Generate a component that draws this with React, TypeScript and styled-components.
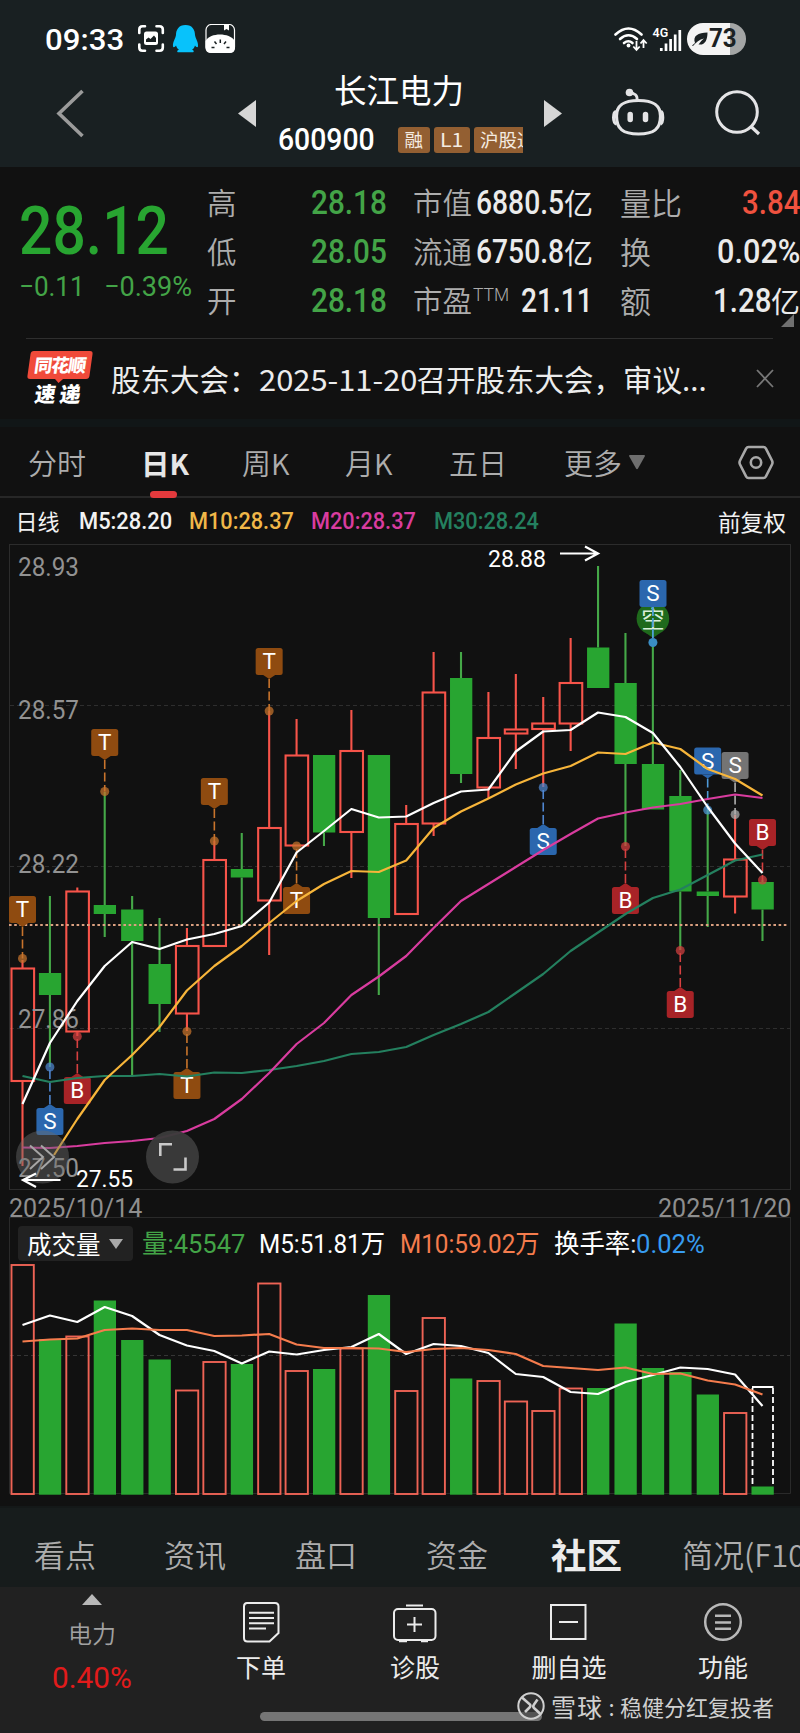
import React, { ReactNode, useLayoutEffect, useRef, useState } from 'react';
import styled, { createGlobalStyle } from 'styled-components';

const GREEN = '#28a531';
const RED = '#f7544a';
const CJK = '"Noto Sans CJK SC", sans-serif';
const DIN = 'Roboto, "Noto Sans CJK SC", sans-serif';

const GlobalStyle = createGlobalStyle`
  * { box-sizing: border-box; }
  body { margin: 0; background: #111; font-family: ${CJK}; }
  svg { display: block; }
`;

/* ---------- text squeezed to a fixed advance, like a DIN numeral face ---------- */

const FitBox = styled.span<{ $w: number }>`
  display: inline-block;
  width: ${(p) => p.$w}px;
  white-space: nowrap;
  flex: none;
`;
const FitInner = styled.span`
  display: inline-block;
  transform-origin: 0 50%;
`;

function Fit({ w, children }: { w: number; children: ReactNode }) {
  const ref = useRef<HTMLSpanElement>(null);
  const [scale, setScale] = useState(1);
  useLayoutEffect(() => {
    if (ref.current && ref.current.offsetWidth) setScale(w / ref.current.offsetWidth);
  }, [w]);
  return (
    <FitBox $w={w}>
      <FitInner ref={ref} style={{ transform: `scaleX(${scale})` }}>{children}</FitInner>
    </FitBox>
  );
}

/* ---------- header ---------- */

const Page = styled.div`
  position: relative;
  width: 800px;
  height: 1733px;
  overflow: hidden;
  background: #111;
  color: #fff;
`;
const Header = styled.header`
  height: 167px;
  background: #192022;
`;
const StatusBar = styled.div`
  height: 72px;
  padding: 6px 54px 0 45px;
  display: flex;
  align-items: center;
`;
const Clock = styled.span`
  padding-top: 2px;
  font: 500 30px/36px ${DIN};
  width: 93px;
`;
const StatusRight = styled.div`
  margin-left: auto;
  display: flex;
  align-items: center;
`;
const Battery = styled.div`
  width: 59px;
  height: 32px;
  border-radius: 16px;
  margin-left: 5px;
  padding-left: 4px;
  display: flex;
  align-items: center;
  background: linear-gradient(90deg, #f4f4f4 0 43px, #a3a5a5 43px);
  color: #1b2123;
  font: 700 25px/34px ${DIN};
`;
const NavBar = styled.div`
  height: 95px;
  display: grid;
  grid-template-columns: 238px 40px 245px 89px 102px 1fr;
`;
const NavIcon = styled.div<{ $x: number; $y: number }>`
  padding: ${(p) => p.$y}px 0 0 ${(p) => p.$x}px;
`;
const TitleBlock = styled.div`
  overflow: hidden;
`;
const StockName = styled.div`
  height: 48px;
  padding-left: 56px;
  font-size: 32.5px;
  line-height: 34px;
`;
const CodeRow = styled.div`
  display: flex;
  align-items: center;
  height: 40px;
  gap: 4px;
`;
const Code = styled.div`
  flex: none;
  width: 116px;
  font: 500 31px/40px ${DIN};
`;
const Tag = styled.span`
  flex: none;
  height: 26px;
  padding: 0 6.5px;
  border-radius: 3px;
  background: #935f32;
  color: #f5ece2;
  font-size: 18.5px;
  line-height: 25px;
  white-space: nowrap;
`;

/* ---------- quote ---------- */

const Quote = styled.section`
  position: relative;
  height: 171px;
  display: grid;
  grid-template-columns: 207px 206px 207px 180px;
`;
const PriceBlock = styled.div`
  padding: 24px 0 0 19px;
  color: ${GREEN};
`;
const Price = styled.div`
  font: 500 67px/80px ${DIN};
`;
const Change = styled.div`
  display: flex;
  gap: 19px;
  margin-top: -1px;
  font: 400 28px/34px ${DIN};
  color: #43a447;
`;
const StatColumn = styled.div<{ $pad: number }>`
  padding: 10.5px ${(p) => p.$pad}px 0 0;
`;
const Stat = styled.div`
  height: 49px;
  display: flex;
  align-items: center;
  justify-content: space-between;
`;
const StatLabel = styled.span<{ $size?: number }>`
  color: #adadad;
  font-size: ${(p) => p.$size || 29.5}px;
  font-weight: 350;
  line-height: 47px;
  margin-top: -2px;
  white-space: nowrap;
`;
const Sup = styled.sup`
  font: 300 17.5px/1 ${DIN};
  vertical-align: 11px;
  margin-left: 1px;
`;
const StatValue = styled.span<{ $color?: string }>`
  display: flex;
  align-items: center;
  color: ${(p) => p.$color || '#ebebeb'};
  font: 500 34px/49px ${DIN};
`;
const Unit = styled.span`
  font: 400 29px/45px ${CJK};
`;
const ExpandCorner = styled.svg`
  position: absolute;
  right: 6px;
  top: 147px;
`;

/* ---------- news ---------- */

const News = styled.section`
  height: 80px;
  margin-left: 26px;
  display: flex;
  align-items: flex-start;
`;
const NewsRule = styled.div`
  height: 1px;
  margin: 0 27px 0 26px;
  background: #2f2f2f;
`;
const NewsLogo = styled.div`
  width: 85px;
  padding-top: 12px;
`;
const LogoTop = styled.div`
  position: relative;
  width: 62px;
  height: 28px;
  margin-left: 3px;
  border-radius: 3px;
  transform: skewX(-8deg);
  background: #f04a3a;
  font: 900 18px/27px ${CJK};
  text-align: center;
  letter-spacing: -1px;
  &::after {
    content: '';
    position: absolute;
    left: 27px;
    bottom: -4px;
    border: 5px solid transparent;
    border-top-color: #f04a3a;
    border-bottom: 0;
  }
`;
const LogoBottom = styled.div`
  padding-left: 9px;
  transform: skewX(-8deg);
  font: 900 21px/28px ${CJK};
  letter-spacing: 4px;
`;
const NewsText = styled.div`
  width: 645px;
  padding-top: 17px;
  color: #ececec;
  font-size: 29.5px;
  line-height: 44px;
  white-space: nowrap;
`;
const Band = styled.div`
  height: 8px;
  background: #111617;
`;

/* ---------- period tabs ---------- */

const PeriodTabs = styled.nav`
  height: 71px;
  border-bottom: 2px solid #272727;
  padding-left: 28px;
  display: grid;
  grid-template-columns: 113px 101px 103px 104px 115px 65px 109px 1fr;
`;
const PeriodTab = styled.div<{ $active?: boolean }>`
  position: relative;
  color: ${(p) => (p.$active ? '#e6e6e6' : '#adadad')};
  font-size: ${(p) => (p.$active ? 28.5 : 29)}px;
  font-weight: ${(p) => (p.$active ? 700 : 350)};
  line-height: 71px;
  white-space: nowrap;
`;
const Underline = styled.i`
  position: absolute;
  left: 9px;
  top: 64px;
  width: 27px;
  height: 7px;
  border-radius: 4px;
  background: #e33a3d;
`;
const TabIcon = styled.div<{ $y: number }>`
  padding-top: ${(p) => p.$y}px;
`;
const MaRow = styled.div`
  height: 42px;
  padding: 4px 14px 0 15.5px;
  display: flex;
  align-items: center;
`;
const MaLabel = styled.span<{ $push?: boolean }>`
  font-size: ${(p) => (p.$push ? 22.7 : 22)}px;
  line-height: 36px;
  width: ${(p) => (p.$push ? 'auto' : '63px')};
  margin-left: ${(p) => (p.$push ? 'auto' : 0)};
  margin-top: ${(p) => (p.$push ? 2 : -3)}px;
  color: #f2f2f2;
`;
const MaValue = styled.span<{ $color: string; $gap: number }>`
  margin-right: ${(p) => p.$gap}px;
  color: ${(p) => p.$color};
  font: 500 24px/36px ${DIN};
`;
const DateRow = styled.div`
  height: 25px;
  padding: 0 9px;
  display: flex;
  justify-content: space-between;
  color: #8e8e8e;
  font: 400 26px/32px ${DIN};
`;
const VolumeHeader = styled.div`
  height: 45px;
  margin: 0 9px;
  padding: 7px 0 0 8px;
  border: 1px solid #2a2a2a;
  border-bottom: 0;
  display: flex;
  align-items: center;
`;
const VolumeSelect = styled.div`
  width: 115px;
  height: 35px;
  margin-right: 9px;
  padding-left: 9px;
  border-radius: 4px;
  background: #222;
  display: flex;
  align-items: center;
  gap: 8px;
  font-size: 24.5px;
  line-height: 34px;
`;
const VolumeValue = styled.span<{ $color?: string; $gap?: number }>`
  margin-right: ${(p) => p.$gap ?? 14}px;
  color: ${(p) => p.$color || '#fff'};
  font: 400 26px/36px ${DIN};
`;

/* ---------- bottom ---------- */

const InfoTabs = styled.nav`
  height: 79px;
  padding: 0 0 0 34px;
  background: #171c1c;
  display: grid;
  grid-template-columns: 130px 131px 131px 125px 131px 1fr;
`;
const InfoTab = styled.div<{ $active?: boolean }>`
  overflow: hidden;
  color: ${(p) => (p.$active ? '#ececec' : '#adadad')};
  font-size: ${(p) => (p.$active ? 35.5 : 31)}px;
  font-weight: ${(p) => (p.$active ? 700 : 350)};
  line-height: 91px;
  white-space: nowrap;
`;
const ActionBar = styled.footer`
  height: 146px;
  background: #212121;
  display: grid;
  grid-template-columns: 184px repeat(4, 1fr);
`;
const Action = styled.div`
  padding-top: 10px;
  display: flex;
  flex-direction: column;
  align-items: center;
  color: #ececec;
  font-size: 25px;
  line-height: 42px;
`;
const Sector = styled.div`
  padding: 7px 0 0 0;
  display: flex;
  flex-direction: column;
  align-items: center;
  color: #a2a2a2;
  font-size: 24px;
  font-weight: 350;
  line-height: 55px;
`;
const SectorChange = styled.div`
  padding-top: 1px;
  color: #e21b1b;
  font: 400 29px/34px ${DIN};
`;
const HomeIndicator = styled.div`
  position: absolute;
  left: 260px;
  top: 1712px;
  width: 282px;
  height: 9px;
  border-radius: 5px;
  background: #757575;
`;
const Watermark = styled.div`
  position: absolute;
  left: 517px;
  top: 1688px;
  display: flex;
  align-items: center;
  color: #d0d0d0;
  font-size: 22px;
  line-height: 36px;
  white-space: nowrap;
`;
const Brand = styled.span`
  margin-left: 6px;
  font-size: 25px;
  font-weight: 400;
  letter-spacing: 1px;
`;
const Colon = styled.span`
  width: 17px;
  text-align: center;
`;

/* ---------- chart data (x = slot, y in page pixels) ---------- */

const slotX = (i: number) => 22.5 + i * 27.407;

type Candle = [up: 0 | 1, high: number, top: number, bottom: number, low: number];
const candles: Candle[] = [
  [1, 960, 968.5, 1081, 1166], [0, 896, 973, 995, 1067], [1, 887.5, 891.5, 1031.5, 1036],
  [0, 792, 905, 914, 937], [0, 896, 909.5, 941, 1076], [0, 918, 964, 1004, 1032],
  [1, 928, 946, 1013.5, 1031], [1, 841, 860, 946, 946], [0, 833, 869, 877.5, 926],
  [1, 711, 828, 900.5, 955], [1, 719, 755.5, 845.5, 845.5], [0, 755, 755, 832.5, 846],
  [1, 710, 751, 832, 878], [0, 755, 755, 918, 995], [1, 805, 824, 914, 914],
  [1, 652, 692.5, 823.5, 836], [0, 652, 678, 774, 783], [1, 692, 738, 787.5, 798],
  [1, 674, 729.5, 733.5, 769], [1, 697, 723.5, 729, 787], [1, 638, 683, 723.5, 751],
  [0, 566, 647.5, 688, 688], [0, 633, 683, 764, 846], [0, 642, 764, 809.5, 809.5],
  [0, 770, 796, 891.5, 950], [0, 810, 891.5, 896, 927], [1, 815, 859.5, 896.5, 913.5],
  [0, 880, 882, 909.5, 941],
];
const ma5 = [1104, 1043, 1001, 966, 942, 949, 939.5, 934, 926, 902.5, 852.5, 831, 809, 817.5, 816.5, 803, 791.5, 789.5, 751.5, 731.5, 730, 712.5, 717, 733, 767, 807, 843.5, 873];
/* the ten-day line enters the frame between the second and the third slot */
const ma10 = [1119, 1080, 1055, 1027, 990.5, 966, 946, 923, 901, 884, 871, 872, 860.5, 828, 811.5, 798.5, 784.5, 773.5, 766, 752.5, 754, 742.5, 749, 769, 779, 795.5];
const ma20 = [1147.5, 1148, 1146, 1143, 1141, 1138, 1131, 1119, 1099, 1073, 1044, 1023, 995, 976.5, 956, 928, 901, 884, 867, 850, 834, 818.5, 812.5, 807.5, 804, 799, 794.5, 798];
const ma30 = [1076, 1082, 1078, 1076, 1076, 1074, 1076.5, 1072.5, 1073, 1070, 1066, 1061, 1054, 1052, 1047, 1035, 1024, 1012, 993, 974, 951, 932.5, 914, 898, 889.5, 875, 860.5, 854.5];
const volumes = [1265, 1339, 1336.5, 1300.5, 1340, 1359.5, 1390.5, 1362, 1364, 1283.5, 1371, 1369, 1348.5, 1295, 1391, 1318, 1378.5, 1381, 1401.5, 1411, 1388.5, 1388, 1323.5, 1368, 1372, 1394.5, 1413, 1486.5];
const vol5 = [1325, 1315.5, 1322, 1307, 1316, 1335, 1345.5, 1351, 1363.5, 1351.5, 1354.5, 1350, 1347, 1334, 1354, 1344, 1346, 1353, 1374, 1377, 1392, 1394, 1382, 1375, 1367.5, 1369, 1374.5, 1406];
const vol10 = [1341.5, 1339.5, 1338.5, 1330, 1328.5, 1330, 1330, 1336, 1335.5, 1334, 1344.5, 1348, 1348, 1348.5, 1352, 1349, 1348, 1350, 1354, 1366, 1368, 1370, 1367.5, 1374, 1373.5, 1380.5, 1384.5, 1394.5];

const toPoints = (ys: number[], first = 0) =>
  ys.map((y, i) => `${slotX(i + first).toFixed(1)},${y}`).join(' ');

type Mark = [letter: string, slot: number, boxTop: number, dot: number, color: string, line: string];
const BROWN = '#8f4b10';
const BLUE = '#2b67ae';
const CRIMSON = '#a82327';
const marks: Mark[] = [
  ['T', 0, 896, 958.5, BROWN, '#c8742c'], ['T', 3, 729, 791.5, BROWN, '#c8742c'],
  ['T', 7, 778, 841, BROWN, '#c8742c'], ['T', 9, 648, 711, BROWN, '#c8742c'],
  ['T', 6, 1072, 1031.5, BROWN, '#c8742c'], ['T', 10, 887, 846, BROWN, '#c8742c'],
  ['S', 1, 1108, 1067, BLUE, '#4f86d0'], ['B', 2, 1077, 1036.5, CRIMSON, '#d64040'],
  ['S', 19, 828, 787.5, BLUE, '#4f86d0'], ['B', 22, 887, 846.5, CRIMSON, '#d64040'],
  ['B', 24, 991, 950.5, CRIMSON, '#d64040'], ['S', 25, 747.5, 810, BLUE, '#4f9ad8'],
  ['S', 26, 752, 814.5, '#747474', '#b0b0b0'], ['B', 27, 819, 880, CRIMSON, '#d64040'],
];

function MarkFlag({ mark: [letter, slot, top, dot, color, line] }: { mark: Mark }) {
  const x = slotX(slot);
  const above = dot > top;
  const edge = above ? top + 27 : top;
  const tip = above ? edge + 4 : edge - 4;
  return (
    <g>
      <line x1={x} x2={x} y1={tip} y2={dot} stroke={line} strokeWidth="1.6" strokeDasharray="9 3.5" />
      <circle cx={x} cy={dot} r="4.5" fill={line} fillOpacity="0.72" />
      <rect x={x - 13.5} y={top} width="27" height="27" rx="2.5" fill={color} />
      <path d={`M${x - 6} ${edge}L${x} ${tip}L${x + 6} ${edge}Z`} fill={color} />
      <text x={x} y={top + 21} textAnchor="middle" fontFamily={DIN} fontSize="22.5" fontWeight="400" fill="#fff">{letter}</text>
    </g>
  );
}

function PriceChart() {
  return (
    <svg width="800" height="652" viewBox="0 540 800 652">
      <rect x="9.5" y="544.5" width="781" height="645" fill="none" stroke="#2c2c2c" />
      {[705.5, 866.5, 1028.5].map((y) => (
        <line key={y} x1="10" x2="790" y1={y} y2={y} stroke="#2e2e2e" strokeDasharray="4 3" />
      ))}
      {candles.map(([up, high, top, bottom, low], i) => {
        const x = slotX(i);
        const c = up ? RED : GREEN;
        return (
          <g key={i}>
            <path d={`M${x} ${high}V${top}M${x} ${bottom}V${low}`} stroke={up ? RED : '#45a848'} strokeWidth="2.1" />
            {up ? (
              <rect x={x - 11} y={top} width="22.6" height={bottom - top} fill="none" stroke={c} strokeWidth="2.1" />
            ) : (
              <rect x={x - 11} y={top} width="22.3" height={bottom - top} fill={c} />
            )}
          </g>
        );
      })}
      <line x1="9" x2="789" y1="925" y2="925" stroke="#dba080" strokeWidth="1.8" strokeDasharray="2.6 2.6" />
      <g fontFamily={DIN} fontSize="26" fill="#929292">
        {([['28.93', 575.5], ['28.57', 718.5], ['28.22', 873], ['27.86', 1028], ['27.50', 1176.5]] as [string, number][]).map(([t, y]) => (
          <text key={t} x="18" y={y} textLength="61" lengthAdjust="spacingAndGlyphs">{t}</text>
        ))}
      </g>
      {marks.map((m) => <MarkFlag key={`${m[0]}${m[1]}`} mark={m} />)}
      <circle cx="652.9" cy="618.5" r="16.3" fill="#1f6a1c" />
      <path d="M646 633L653 638L660 633Z" fill="#1f6a1c" />
      <text x="652.9" y="627.5" textAnchor="middle" fontFamily={CJK} fontSize="23.5" fill="#d9efd9">空</text>
      <rect x="639.5" y="580" width="27" height="27" rx="2.5" fill={BLUE} />
      <text x="652.9" y="601" textAnchor="middle" fontFamily={DIN} fontSize="22.5" fill="#fff">S</text>
      <line x1="652.9" x2="652.9" y1="607" y2="642" stroke="#4fa0d8" strokeWidth="1.8" strokeDasharray="9 2" />
      <circle cx="652.9" cy="642.5" r="4.5" fill="#3a8dc4" />
      <g fill="none" strokeWidth="2.2" strokeLinejoin="round">
        <polyline points={toPoints(ma30)} stroke="#24805f" />
        <polyline points={toPoints(ma20)} stroke="#d93c9f" />
        <polyline points={`54,1155 ${toPoints(ma10, 2)}`} stroke="#f7b53a" />
        <polyline points={toPoints(ma5)} stroke="#fff" />
      </g>
      <g fontFamily={DIN} fontSize="24" fill="#fff">
        <text x="488" y="567" textLength="58" lengthAdjust="spacingAndGlyphs">28.88</text>
        <text x="76" y="1187" textLength="57" lengthAdjust="spacingAndGlyphs">27.55</text>
      </g>
      <circle cx="42.5" cy="1157" r="26.5" fill="#6a6a6a" fillOpacity="0.45" />
      <path d="M30 1145.5L43 1157L30 1169M41 1145.5L54 1157L41 1169" fill="none" stroke="#a5a5a5" strokeWidth="2" />
      <circle cx="172.5" cy="1157" r="26.5" fill="#3b3b3b" fillOpacity="0.96" />
      <path d="M160.3 1156V1144.3H172M173.500 1169.500H185.500V1157.500" fill="none" stroke="#c9c9c9" strokeWidth="2.6" />
      <path d="M560 553.5H597M585 546.5L598 553.5L585 560.5M60.5 1180H24M36 1173.5L23 1180L36 1187" fill="none" stroke="#fff" strokeWidth="2.2" />
    </svg>
  );
}

function VolumeChart() {
  const base = 1494;
  return (
    <svg width="800" height="246" viewBox="0 1262 800 246">
      <path d="M9.5 1262V1493.5H790.5V1262" fill="none" stroke="#2a2a2a" />
      <line x1="10" x2="790" y1="1355.5" y2="1355.5" stroke="#353535" strokeDasharray="4 3" />
      {volumes.map((top, i) => {
        const x = slotX(i);
        return candles[i][0] ? (
          <rect key={i} x={x - 11} y={top} width="22.3" height={base - top} fill="none" stroke="#ee6355" strokeWidth="1.9" />
        ) : (
          <rect key={i} x={x - 11} y={top} width="22.3" height={base + 0.7 - top} fill={GREEN} />
        );
      })}
      <path d="M752 1387H773.5" stroke="#fff" strokeWidth="2" />
      <path d="M752.5 1388V1486M773 1388V1486" stroke="#fff" strokeWidth="1.8" strokeDasharray="6 3" />
      <g fill="none" strokeWidth="2.2" strokeLinejoin="round">
        <polyline points={toPoints(vol5)} stroke="#fff" />
        <polyline points={toPoints(vol10)} stroke="#f57c4d" />
      </g>
      <rect x="0" y="1506" width="800" height="2" fill="#141818" />
    </svg>
  );
}

/* ---------- icons ---------- */

const StatusIcons = () => (
  <svg width="98" height="30" viewBox="138 25 98 30">
    <g fill="none" stroke="#fff" strokeWidth="2.6" strokeLinecap="round">
      <path d="M139.3 34V30.5Q139.3 27.3 142.5 27.3H145M156.5 27.3H159.5Q162.8 27.3 162.8 30.5V34M162.8 45.5V48.5Q162.8 51.7 159.5 51.7H156.5M145 51.7H142.5Q139.3 51.7 139.3 48.5V45.5" />
    </g>
    <rect x="144" y="32.5" width="14" height="13.5" rx="2.5" fill="#fff" />
    <path d="M146 43V40.5L148.5 38.5L150.5 40L154 36.5L156 39V43Z" fill="#192022" />
    <path d="M185.5 26C178.5 26 176 31 176 36C175.5 39.5 172.5 43 173 47.5C173.5 49 175 48 176 46.5C176.5 48.5 177.5 49.8 179 50.8C177 51.3 176.5 53.3 178.5 53.3H192.5C194.5 53.3 194 51.3 192 50.8C193.5 49.8 194.5 48.5 195 46.5C196 48 197.5 49 198 47.5C198.5 43 195.5 39.5 195 36C195 31 192.5 26 185.5 26Z" fill="#08c2fb" />
    <rect x="206" y="25.5" width="28.5" height="28" rx="5.5" fill="none" stroke="#fff" strokeWidth="1.2" />
    <path d="M205.5 42C208 37.5 214 35.5 220 35.5S232 37.5 235 42V48.5Q235 54 229.5 54H211.5Q205.5 54 205.5 48.5Z" fill="#fff" />
    <path d="M224 25.5H229V31.5L226.5 30L224 31.5Z" fill="#fff" />
    <path d="M220.3 40.5V44M214.5 42.5L216.5 45M226 42.5L224 45M211.5 48.5H214.5M226.5 48.5H229.5" stroke="#192022" strokeWidth="1.5" />
  </svg>
);

const SignalIcons = () => (
  <svg width="70" height="30" viewBox="612 24 70 30">
    <g fill="none" stroke="#fff" strokeWidth="2.6" strokeLinecap="round">
      <path d="M615.5 34.5Q628.5 22.5 641.5 34.5" />
      <path d="M620 39Q628.5 31.5 637 39" />
      <path d="M624 43Q628.5 39.5 632.5 43" />
    </g>
    <circle cx="628.5" cy="45.5" r="1.9" fill="#fff" />
    <path d="M636.5 41V49.5M633.3 46.5L636.5 50L639.7 46.5M643.5 48V40.5M640.5 43.5L643.5 40L646.7 43.5" fill="none" stroke="#fff" strokeWidth="1.8" />
    <text x="652.5" y="37" fontFamily="Roboto, sans-serif" fontWeight="600" fontSize="12.5" fill="#fff">4G</text>
    <path d="M661.3 48V51M666 43.5V51M670.6 39V51M675.2 34.5V51M679.8 30V51" stroke="#fff" strokeWidth="2.7" />
  </svg>
);

const Leaf = () => (
  <svg width="18" height="18" viewBox="0 0 18 18">
    <path d="M4 13C1.5 6 7 2.5 16.5 2.5C16.5 10 14 15.5 7.5 14.5C9 12.5 11 10 13 8.5C8.5 9.5 5 12.5 2 16L1 15.5C2 14.5 3 13.8 4 13Z" fill="#1b2123" />
  </svg>
);

const Triangle = ({ w, h, d, fill = '#d6d6d6' }: { w: number; h: number; d: string; fill?: string }) => (
  <svg width={w} height={h} viewBox={`0 0 ${w} ${h}`}><path d={d} fill={fill} /></svg>
);

const RobotIcon = () => (
  <svg width="54" height="50" viewBox="612 87 54 50" fill="none" stroke="#e4e4e6">
    <path d="M616.5 116C616.5 104 625 100.5 638.5 100.5S660.5 104 660.5 116C660.5 129 654 134 638.5 134S616.5 129 616.5 116Z" strokeWidth="3.2" />
    <path d="M616 111.5Q613.5 112 613.5 117.5T616.5 124M661 111.5Q662.8 112 662.8 117.5T660.5 124" strokeWidth="3" />
    <path d="M637 100Q638 93 629 93" strokeWidth="2.8" />
    <circle cx="629.5" cy="92.5" r="3.8" fill="#e4e4e6" stroke="none" />
    <path d="M630.2 114.5V119.5M645.5 114.5V119.5" strokeWidth="5.5" strokeLinecap="round" />
  </svg>
);

export default function App() {
  return (
    <Page>
      <GlobalStyle />
      <Header>
        <StatusBar>
          <Clock><Fit w={79}>09:33</Fit></Clock>
          <StatusIcons />
          <StatusRight>
            <SignalIcons />
            <Battery><Leaf /><Fit w={28}>73</Fit></Battery>
          </StatusRight>
        </StatusBar>
        <NavBar>
          <NavIcon $x={55} $y={16}>
            <svg width="30" height="50" fill="none"><path d="M27.5 3L4 25.5L27.5 48" stroke="#9b9b9b" strokeWidth="3.6" /></svg>
          </NavIcon>
          <NavIcon $x={0} $y={28}><Triangle w={18} h={27} d="M18 0V27L0 13.5Z" /></NavIcon>
          <TitleBlock>
            <StockName>长江电力</StockName>
            <CodeRow>
              <Code><Fit w={97}>600900</Fit></Code>
              <Tag>融</Tag>
              <Tag><Fit w={23}>L1</Fit></Tag>
              <Tag>沪股通</Tag>
            </CodeRow>
          </TitleBlock>
          <NavIcon $x={21} $y={28}><Triangle w={18} h={27} d="M0 0V27L18 13.5Z" /></NavIcon>
          <NavIcon $x={0} $y={15}><RobotIcon /></NavIcon>
          <NavIcon $x={1} $y={18}>
            <svg width="46" height="46" fill="none" stroke="#e4e4e6">
              <circle cx="22" cy="22" r="20.3" strokeWidth="3" />
              <path d="M36 36.5L44 44" strokeWidth="3.2" />
            </svg>
          </NavIcon>
        </NavBar>
      </Header>

      <Quote>
        <PriceBlock>
          <Price><Fit w={150}>28.12</Fit></Price>
          <Change><Fit w={66}>−0.11</Fit><Fit w={88}>−0.39%</Fit></Change>
        </PriceBlock>
        <StatColumn $pad={26}>
          {[['高', '28.18'], ['低', '28.05'], ['开', '28.18']].map(([k, v]) => (
            <Stat key={k}><StatLabel>{k}</StatLabel><StatValue $color="#43a447"><Fit w={76}>{v}</Fit></StatValue></Stat>
          ))}
        </StatColumn>
        <StatColumn $pad={27}>
          <Stat><StatLabel>市值</StatLabel><StatValue><Fit w={88}>6880.5</Fit><Unit>亿</Unit></StatValue></Stat>
          <Stat><StatLabel>流通</StatLabel><StatValue><Fit w={88}>6750.8</Fit><Unit>亿</Unit></StatValue></Stat>
          <Stat><StatLabel>市盈<Sup>TTM</Sup></StatLabel><StatValue><Fit w={72}>21.11</Fit></StatValue></Stat>
        </StatColumn>
        <StatColumn $pad={0}>
          <Stat><StatLabel $size={31}>量比</StatLabel><StatValue $color="#f0523f"><Fit w={58}>3.84</Fit></StatValue></Stat>
          <Stat><StatLabel $size={31}>换</StatLabel><StatValue><Fit w={83}>0.02%</Fit></StatValue></Stat>
          <Stat><StatLabel $size={31}>额</StatLabel><StatValue><Fit w={58}>1.28</Fit><Unit>亿</Unit></StatValue></Stat>
        </StatColumn>
        <ExpandCorner width="13" height="13"><path d="M13 0V13H0Z" fill="#707070" /></ExpandCorner>
      </Quote>

      <NewsRule />
      <News>
        <NewsLogo>
          <LogoTop>同花顺</LogoTop>
          <LogoBottom>速递</LogoBottom>
        </NewsLogo>
        <NewsText>股东大会：<Fit w={158}>2025-11-20</Fit>召开股东大会，审议...</NewsText>
        <TabIcon $y={30}>
          <svg width="18" height="19"><path d="M1 1L17 18M17 1L1 18" stroke="#777" strokeWidth="1.8" /></svg>
        </TabIcon>
      </News>
      <Band />

      <PeriodTabs>
        <PeriodTab>分时</PeriodTab>
        <PeriodTab $active>日K<Underline /></PeriodTab>
        <PeriodTab>周K</PeriodTab>
        <PeriodTab>月K</PeriodTab>
        <PeriodTab>五日</PeriodTab>
        <PeriodTab>更多</PeriodTab>
        <TabIcon $y={28}><Triangle w={16} h={15} d="M0 1Q0 0 1 0H15Q16 0 16 1L9 13.5Q8 15 7 13.5Z" fill="#6e6e6e" /></TabIcon>
        <TabIcon $y={18}>
          <svg width="36" height="35" fill="none" stroke="#a8a8a8" strokeWidth="2.6" strokeLinejoin="round">
            <path d="M10.5 2H25.5Q27 2 27.8 3.4L34 15.5Q35 17.5 34 19.5L27.8 31.6Q27 33 25.5 33H10.5Q9 33 8.2 31.6L2 19.5Q1 17.5 2 15.5L8.2 3.4Q9 2 10.5 2Z" />
            <circle cx="18" cy="17.5" r="5.2" />
          </svg>
        </TabIcon>
      </PeriodTabs>
      <MaRow>
        <MaLabel>日线</MaLabel>
        <MaValue $color="#f2f2f2" $gap={17}><Fit w={93}>M5:28.20</Fit></MaValue>
        <MaValue $color="#f0b748" $gap={17}><Fit w={105}>M10:28.37</Fit></MaValue>
        <MaValue $color="#d93c9f" $gap={18}><Fit w={105}>M20:28.37</Fit></MaValue>
        <MaValue $color="#24805f" $gap={0}><Fit w={105}>M30:28.24</Fit></MaValue>
        <MaLabel $push>前复权</MaLabel>
      </MaRow>

      <PriceChart />
      <DateRow><Fit w={133}>2025/10/14</Fit><Fit w={133}>2025/11/20</Fit></DateRow>

      <VolumeHeader>
        <VolumeSelect>成交量<Triangle w={14} h={10} d="M0 0H14L7 10Z" fill="#a8a8a8" /></VolumeSelect>
        <VolumeValue $color="#43a447"><Fit w={103}>量:45547</Fit></VolumeValue>
        <VolumeValue $gap={15}><Fit w={126}>M5:51.81万</Fit></VolumeValue>
        <VolumeValue $color="#f57c4d"><Fit w={140}>M10:59.02万</Fit></VolumeValue>
        <VolumeValue $gap={0}><Fit w={82}>换手率:</Fit></VolumeValue>
        <VolumeValue $color="#379cf0"><Fit w={69}>0.02%</Fit></VolumeValue>
      </VolumeHeader>
      <VolumeChart />

      <InfoTabs>
        <InfoTab>看点</InfoTab>
        <InfoTab>资讯</InfoTab>
        <InfoTab>盘口</InfoTab>
        <InfoTab>资金</InfoTab>
        <InfoTab $active>社区</InfoTab>
        <InfoTab>简况(F10)</InfoTab>
      </InfoTabs>

      <ActionBar>
        <Sector>
          <Triangle w={20} h={11} d="M10 0L20 11H0Z" fill="#b8b8b8" />
          电力
          <SectorChange><Fit w={80}>0.40%</Fit></SectorChange>
        </Sector>
        <Action>
          <svg width="46" height="48" viewBox="238 1597 46 48" fill="none" stroke="#ececec" strokeWidth="2">
            <path d="M247 1603H275Q278.5 1603 278.5 1606.5V1633L269.5 1641.500H247.500Q244 1641.500 244 1638V1606.500Q244 1603 247 1603Z" />
            <path d="M249 1612.7H274M249 1618H274M249 1623.3H274M249 1628.5H266" />
          </svg>
          下单
        </Action>
        <Action>
          <svg width="46" height="48" viewBox="392 1597 46 48" fill="none" stroke="#ececec" strokeWidth="2">
            <rect x="394" y="1609" width="41.5" height="31" rx="4" />
            <path d="M406 1605.5H423M414.5 1617V1632M407 1624.5H422M399 1641.3H407M421 1641.3H428" />
          </svg>
          诊股
        </Action>
        <Action>
          <svg width="46" height="48" viewBox="546 1597 46 48" fill="none" stroke="#ececec" strokeWidth="2">
            <rect x="551" y="1605" width="34.5" height="34" />
            <path d="M559 1622H578" />
          </svg>
          删自选
        </Action>
        <Action>
          <svg width="46" height="48" viewBox="700 1597 46 48" fill="none" stroke="#b8b8b8" strokeWidth="2.5">
            <circle cx="723" cy="1622" r="17.8" />
            <path d="M715 1615.7H731M715 1622.5H731M715 1628.7H731" />
          </svg>
          功能
        </Action>
      </ActionBar>

      <HomeIndicator />
      <Watermark>
        <svg width="28" height="28" viewBox="0 0 28 28" fill="none" stroke="#d0d0d0">
          <circle cx="14" cy="14" r="12.7" fill="#3a3a3a" fillOpacity="0.6" strokeWidth="2" />
          <path d="M5 5.5L13 12.5Q14 14 12.5 15.5L8 20M24 22.5L17 16Q15.5 14.5 17 12.5L20.5 7.5" strokeWidth="2.6" />
        </svg>
        <Brand>雪球</Brand>
        <Colon>:</Colon>
        稳健分红复投者
      </Watermark>
    </Page>
  );
}
